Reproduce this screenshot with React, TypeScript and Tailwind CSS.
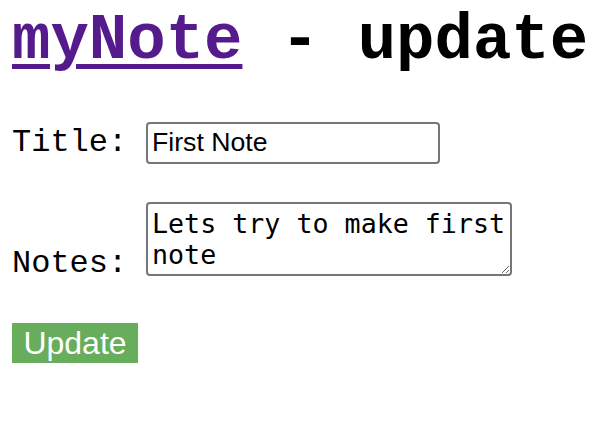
export default function App() {
  return (
    <div className="min-h-screen bg-white pl-[12px] pt-[5px] text-black">
      <h1 className="font-['Liberation_Mono',monospace] text-[64px] font-bold leading-[72px]">
        <a
          href="#"
          className="text-[#551a8b] underline decoration-[5px] underline-offset-[6px]"
        >
          myNote
        </a>{" "}
        - update
      </h1>

      <form onSubmit={(e) => e.preventDefault()}>
        <div className="mt-[42px] flex items-baseline">
          <label
            htmlFor="title"
            className="w-[134px] font-['Liberation_Mono',monospace] text-[32px]"
          >
            Title:
          </label>
          <input
            id="title"
            type="text"
            defaultValue="First Note"
            className="h-[42px] w-[294px] rounded-[4px] border-2 border-[#767676] px-[4px] font-['Liberation_Sans',Arial,sans-serif] text-[26.67px] text-black outline-none"
          />
        </div>

        <div className="mt-[35px] flex items-end">
          <label
            htmlFor="notes"
            className="w-[134px] font-['Liberation_Mono',monospace] text-[32px] leading-[25px]"
          >
            Notes:
          </label>
          <textarea
            id="notes"
            rows={2}
            defaultValue="Lets try to make first note"
            className="h-[74px] w-[366px] rounded-[4px] border-2 border-[#767676] px-[4px] py-[4px] font-['DejaVu_Sans_Mono',monospace] text-[26.67px] leading-[31px] text-black outline-none"
          />
        </div>

        <button
          type="submit"
          className="mt-[47px] block h-[40px] w-[126px] bg-[#67ad5b] font-['Liberation_Sans',Arial,sans-serif] text-[32px] leading-[40px] text-white"
        >
          Update
        </button>
      </form>
    </div>
  );
}
